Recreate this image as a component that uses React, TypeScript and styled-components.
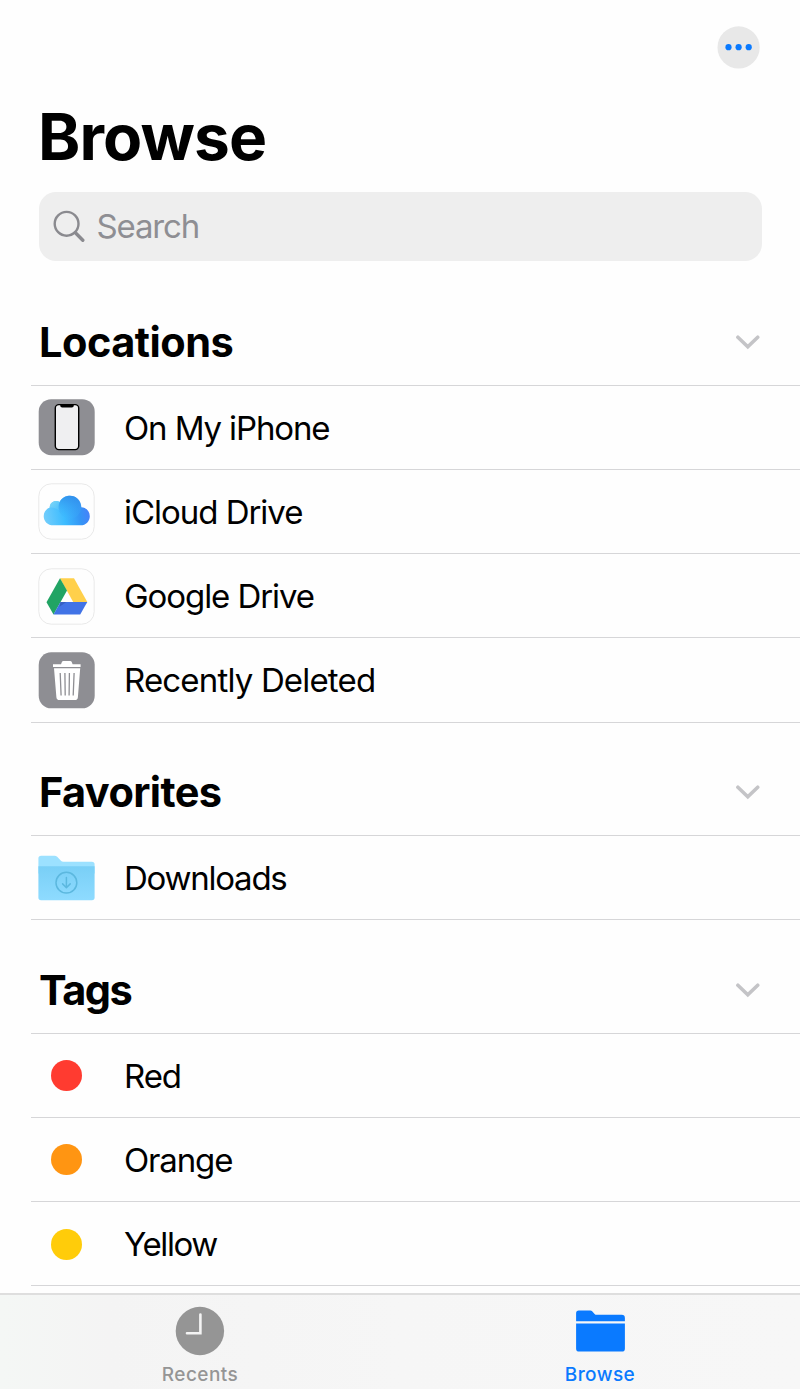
import React from "react";
import styled, { createGlobalStyle } from "styled-components";

const GlobalStyle = createGlobalStyle`
  * { box-sizing: border-box; }
  body { margin: 0; background: #fefefe; }
`;

const Screen = styled.div`
  display: flex;
  flex-direction: column;
  width: 800px;
  height: 1389px;
  overflow: hidden;
  background: #fefefe;
  color: #000;
  font-family: Inter, "Liberation Sans", sans-serif;
`;

const TopBar = styled.header`
  display: flex;
  justify-content: flex-end;
  flex: none;
  height: 96px;
  padding: 26px 40px 0 0;
`;

const MoreButton = styled.button`
  display: flex;
  align-items: center;
  justify-content: center;
  width: 43px;
  height: 43px;
  padding: 0;
  border: 0;
  background: none;
`;

const Title = styled.h1`
  flex: none;
  height: 96px;
  margin: 0;
  padding-left: 38px;
  font-size: 64px;
  line-height: 81px;
  font-weight: 700;
  letter-spacing: -0.9px;
`;

const SearchField = styled.div`
  display: flex;
  align-items: center;
  flex: none;
  gap: 11.5px;
  height: 69px;
  margin: 0 38px 1px 39px;
  padding-left: 14px;
  border-radius: 17px;
  background: #eeeeee;
  color: #8e8e93;
  font-size: 33px;
  line-height: 40px;
  letter-spacing: -1.15px;
`;

const SearchText = styled.span`
  padding-bottom: 2px;
`;

const Content = styled.main`
  display: flex;
  flex-direction: column;
  flex: 1;
  min-height: 0;
  padding-top: 10.3px;
  overflow: hidden;
`;

const SectionHeader = styled.div`
  display: flex;
  align-items: center;
  justify-content: space-between;
  height: 113.4px;
  margin-left: 31px;
  padding: 27px 40px 0 8px;
  border-bottom: 1px solid #d6d6d8;
`;

const SectionTitle = styled.h2<{ $spacing: number }>`
  margin: 0;
  font-size: 41.5px;
  line-height: 50px;
  font-weight: 700;
  letter-spacing: ${({ $spacing }) => $spacing}px;
`;

const Row = styled.div`
  display: flex;
  align-items: center;
  gap: 29px;
  height: 84.25px;
  margin-left: 31px;
  padding: 0.6px 0 0 7px;
  border-bottom: 1px solid #d6d6d8;
`;

const IconSlot = styled.div`
  display: flex;
  align-items: center;
  justify-content: center;
  width: 57px;
  height: 57px;
`;

const RowLabel = styled.span<{ $spacing: number }>`
  font-size: 33px;
  line-height: 42px;
  letter-spacing: ${({ $spacing }) => $spacing}px;
`;

const TagDot = styled.span<{ $color: string }>`
  width: 31px;
  height: 31px;
  border-radius: 50%;
  background: ${({ $color }) => $color};
`;

const TabBar = styled.nav`
  display: flex;
  flex: none;
  height: 96px;
  border-top: 2px solid #dedede;
  background: linear-gradient(90deg, #f4f7f5 0, #f4f4f4 110px, #f6f6f6 400px, #f7f7f7 100%);
`;

const Tab = styled.div<{ $active?: boolean }>`
  display: flex;
  flex-direction: column;
  align-items: center;
  flex: 1;
  padding-top: 11px;
  color: ${({ $active }) => ($active ? "#0a7aff" : "#959595")};
  font-size: 19px;
  line-height: 24px;
  font-weight: 500;
  letter-spacing: 0.45px;
`;

const TabIcon = styled.div`
  height: 57px;
`;

const MoreIcon = () => (
  <svg width="43" height="43" viewBox="0 0 43 43">
    <circle cx="21.6" cy="21.4" r="21.1" fill="#e8e8e8" />
    <g fill="#0a7aff">
      <circle cx="11.5" cy="21.2" r="3.1" />
      <circle cx="21.6" cy="21.2" r="3.1" />
      <circle cx="31.7" cy="21.2" r="3.1" />
    </g>
  </svg>
);

const SearchIcon = () => (
  <svg width="32" height="34" viewBox="0 0 32 34" fill="none" stroke="#8a8a8f">
    <circle cx="13.6" cy="13.8" r="11.9" strokeWidth="2.4" />
    <path d="M22.4 22.8 29.8 30.2" strokeWidth="3.4" strokeLinecap="round" />
  </svg>
);

const Chevron = () => (
  <svg width="25" height="16" viewBox="0 0 25 16" fill="none">
    <path d="M2.9 3.2 12.8 12.7 22.7 3.2" stroke="#c4c4c7" strokeWidth="3.6" strokeLinecap="round" strokeLinejoin="miter" />
  </svg>
);

const PhoneIcon = () => (
  <svg width="57" height="57" viewBox="0 0 57 57">
    <rect x=".7" y=".2" width="56" height="56" rx="12.5" fill="#8e8e93" />
    <rect x="17.3" y="5.6" width="23.4" height="45" rx="3.5" fill="#efeff1" stroke="#000" strokeWidth="1.4" />
    <path d="M22.2 5.3h13.6v1.3a2 2 0 0 1-2 2h-9.6a2 2 0 0 1-2-2z" />
  </svg>
);

const CloudIcon = () => (
  <svg width="57" height="57" viewBox="0 0 57 57">
    <defs>
      <linearGradient id="cloud" x1="5" y1="38" x2="52" y2="30" gradientUnits="userSpaceOnUse">
        <stop offset="0" stopColor="#77cffb" />
        <stop offset=".45" stopColor="#3dbcff" />
        <stop offset=".78" stopColor="#3495f5" />
        <stop offset="1" stopColor="#4781fa" />
      </linearGradient>
      <linearGradient id="cloudTop" x1="30" y1="12" x2="28" y2="40" gradientUnits="userSpaceOnUse">
        <stop offset="0" stopColor="#308ce9" stopOpacity=".85" />
        <stop offset="1" stopColor="#40bdff" stopOpacity="0" />
      </linearGradient>
      <linearGradient id="cloudPuff" x1="12" y1="20" x2="22" y2="31" gradientUnits="userSpaceOnUse">
        <stop offset="0" stopColor="#7ad5f7" />
        <stop offset="1" stopColor="#65caf9" stopOpacity="0" />
      </linearGradient>
    </defs>
    <rect x=".8" y=".8" width="55.4" height="55.4" rx="12.5" fill="#fefefe" stroke="#e9e9e9" />
    <path d="M15.5 42.3C9.5 42.3 5.7 38.2 5.7 33.2c0-4.3 2.6-7.4 6-8.7.2-4 3.1-6.4 6.5-6.4 1.3 0 2.5.3 3.5 1 1.7-3.8 5.4-6.4 10.1-6.4 6.3 0 11.2 4.8 11.5 11.5 4.9.3 8.5 4.1 8.5 9 0 5-3.8 9.1-9.3 9.1z" fill="url(#cloud)" />
    <circle cx="31.8" cy="24.2" r="11.5" fill="url(#cloudTop)" />
    <path d="M11.7 24.5c.2-4 3.1-6.4 6.5-6.4 1.3 0 2.5.3 3.5 1-1.3 2.7-1.4 6.6.3 9.4-2.8-3-6.3-4.6-10.3-4z" fill="url(#cloudPuff)" />
  </svg>
);

const DriveIcon = () => (
  <svg width="57" height="57" viewBox="0 0 57 57">
    <rect x=".8" y=".8" width="55.4" height="55.4" rx="12.5" fill="#fefefe" stroke="#e9e9e9" />
    <path d="M22 10.3h14L49.3 34H35.2z" fill="#ffd04b" />
    <path d="M22 10.3 8.5 34.3l7 12.1L29 22.5z" fill="#21a464" />
    <path d="M22.5 34h26.8l-7.1 12.4H15.5z" fill="#4173e6" />
    <path d="M22.5 34h5.8l-6.8 4.7z" fill="#3560c5" />
  </svg>
);

const TrashIcon = () => (
  <svg width="57" height="57" viewBox="0 0 57 57" fill="#fff">
    <rect x=".7" y=".3" width="56" height="56" rx="12.5" fill="#8e8e93" />
    <path d="M15 12.2h8l1-2.4q.4-.8 1.3-.8h7q.9 0 1.3.8l1 2.4h8v2.9H15z" />
    <path d="M16 16.3h26.2l-2.3 28.9q-.2 2.8-3 2.8H21.4q-2.8 0-3-2.8z" />
    <path d="m22.2 21 .9 22.5M26.9 21l.3 22.5M31.4 21l-.3 22.5M36.1 21l-.9 22.5" fill="none" stroke="#8e8e93" strokeWidth="1.3" />
  </svg>
);

const DownloadsIcon = () => (
  <svg width="57" height="57" viewBox="0 0 57 57">
    <defs>
      <linearGradient id="folder" x1="0" y1="16" x2="0" y2="50" gradientUnits="userSpaceOnUse">
        <stop offset="0" stopColor="#79cff6" />
        <stop offset="1" stopColor="#8edbff" />
      </linearGradient>
    </defs>
    <path d="M.4 8.5q0-2.8 2.8-2.8h13.3q1.6 0 2.7 1.1l3.5 3.7q1.1 1.2 2.8 1.2h28.3q2.8 0 2.8 2.8v9H.4z" fill="#9ce1ff" />
    <path d="M.4 16.2h56.2v31.3q0 2.7-2.7 2.7H3.1q-2.7 0-2.7-2.7z" fill="url(#folder)" />
    <g fill="none" stroke="#5cb8df" strokeWidth="1.5" strokeLinecap="round" strokeLinejoin="round">
      <circle cx="28.4" cy="32.7" r="10.4" />
      <path d="M28.4 27.5v10M24.6 33.9l3.8 3.8 3.8-3.8" />
    </g>
  </svg>
);

const ClockIcon = () => (
  <svg width="50" height="50" viewBox="0 0 50 50">
    <circle cx="24.9" cy="25" r="24.2" fill="#959595" />
    <path d="M25.4 8.6v18.7H12" fill="none" stroke="#f4f4f4" strokeWidth="2.6" strokeLinecap="round" />
  </svg>
);

const FolderIcon = () => (
  <svg width="50" height="50" viewBox="0 0 50 50" fill="#0a7aff">
    <path d="M1.1 7.2q0-2.7 2.7-2.7h11.4q1.3 0 2.2.9l2.2 2.5q.8.9 2.1.9h25q3.2 0 3.2 3.2v3.3H1.1z" />
    <path d="M1.1 17.4h48.8v25q0 3.2-3.2 3.2H4.3q-3.2 0-3.2-3.2z" />
  </svg>
);

interface Item {
  label: string;
  icon: React.ReactNode;
  spacing: number;
}

const sections: { title: string; spacing: number; items: Item[] }[] = [
  {
    title: "Locations",
    spacing: -0.5,
    items: [
      { label: "On My iPhone", icon: <PhoneIcon />, spacing: -1.12 },
      { label: "iCloud Drive", icon: <CloudIcon />, spacing: -1.03 },
      { label: "Google Drive", icon: <DriveIcon />, spacing: -1.07 },
      { label: "Recently Deleted", icon: <TrashIcon />, spacing: -0.83 },
    ],
  },
  {
    title: "Favorites",
    spacing: -0.6,
    items: [{ label: "Downloads", icon: <DownloadsIcon />, spacing: -1.25 }],
  },
  {
    title: "Tags",
    spacing: -1.5,
    items: [
      { label: "Red", icon: <TagDot $color="#ff3b30" />, spacing: -1.1 },
      { label: "Orange", icon: <TagDot $color="#ff9512" />, spacing: -1.15 },
      { label: "Yellow", icon: <TagDot $color="#ffcc0a" />, spacing: -1.4 },
    ],
  },
];

export default function App() {
  return (
    <Screen>
      <GlobalStyle />
      <TopBar>
        <MoreButton aria-label="More">
          <MoreIcon />
        </MoreButton>
      </TopBar>
      <Title>Browse</Title>
      <SearchField>
        <SearchIcon />
        <SearchText>Search</SearchText>
      </SearchField>
      <Content>
        {sections.map((section) => (
          <section key={section.title}>
            <SectionHeader>
              <SectionTitle $spacing={section.spacing}>{section.title}</SectionTitle>
              <Chevron />
            </SectionHeader>
            {section.items.map((item) => (
              <Row key={item.label}>
                <IconSlot>{item.icon}</IconSlot>
                <RowLabel $spacing={item.spacing}>{item.label}</RowLabel>
              </Row>
            ))}
          </section>
        ))}
      </Content>
      <TabBar>
        <Tab>
          <TabIcon><ClockIcon /></TabIcon>
          Recents
        </Tab>
        <Tab $active>
          <TabIcon><FolderIcon /></TabIcon>
          Browse
        </Tab>
      </TabBar>
    </Screen>
  );
}
